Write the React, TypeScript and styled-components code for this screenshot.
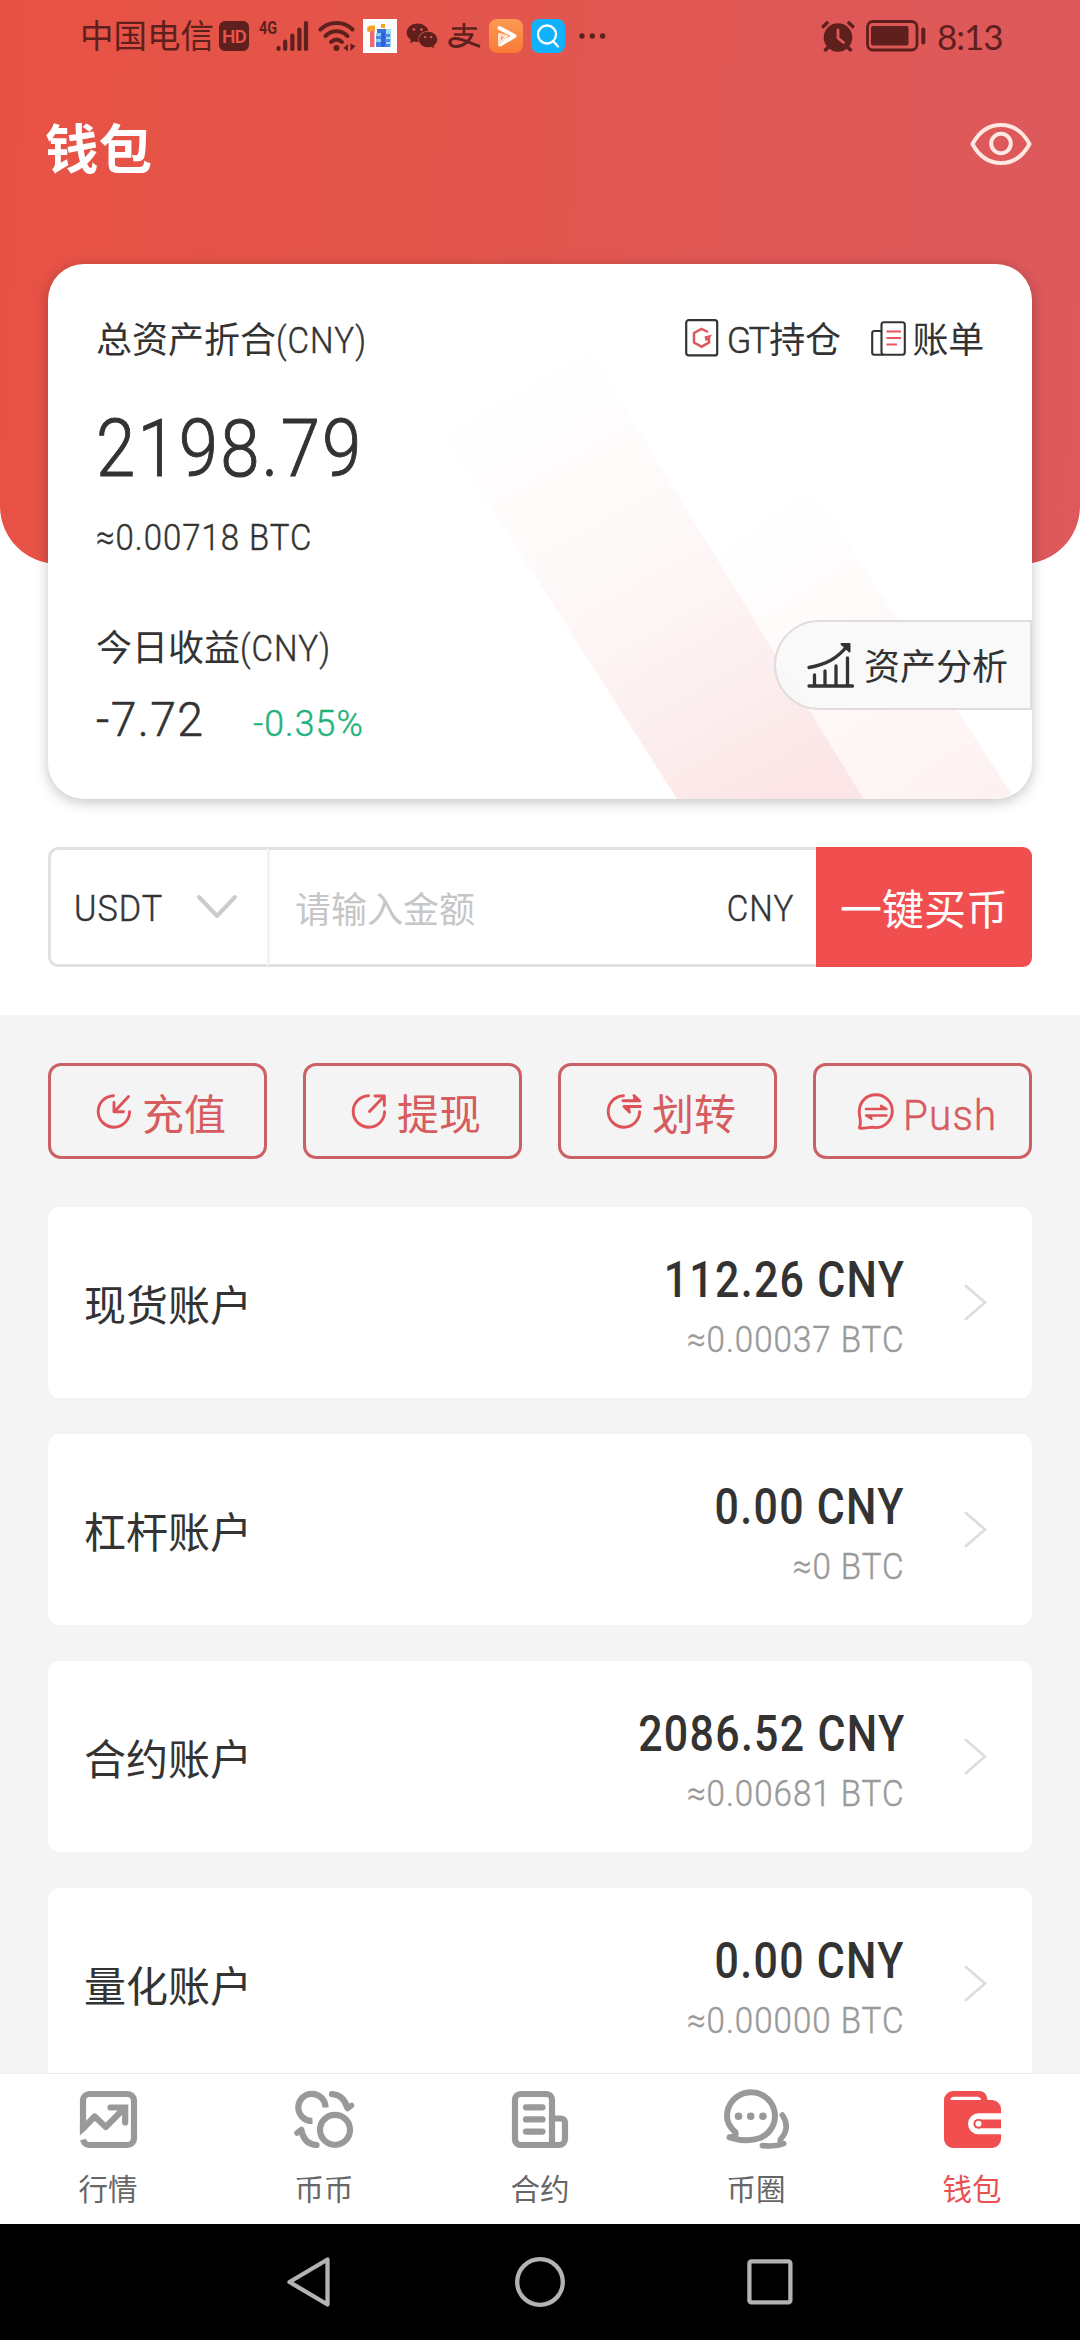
import React from 'react';
import styled, { createGlobalStyle } from 'styled-components';
import { FaWeixin } from 'react-icons/fa';

const INK = '#333333';
const STATUS = '#5e201d';
const RED = '#f14f4f';
const ROSE = '#cb6164';

const GlobalStyle = createGlobalStyle`
  *, *::before, *::after { box-sizing: border-box; }
  body {
    margin: 0;
    background: #fff;
    font-family: Roboto, "Noto Sans CJK SC", sans-serif;
    color: ${INK};
  }
  svg { display: block; flex: none; }
`;

const Screen = styled.div`
  display: flex;
  flex-direction: column;
  width: 1080px;
  height: 2340px;
  overflow: hidden;
  background: #fff;
`;

const Hero = styled.header`
  flex: none;
  height: 564px;
  border-radius: 0 0 58px 58px;
  background: linear-gradient(93deg, #e85245 0%, #e3554b 40%, #df5857 75%, #dd595b 100%);
`;

const StatusBar = styled.div`
  display: flex;
  align-items: center;
  height: 72px;
  padding: 0 77px 0 80px;
  color: ${STATUS};
`;

const StatusItem = styled.div<{ $gap?: number }>`
  display: flex;
  margin-left: ${(p) => p.$gap ?? 0}px;
`;

const Carrier = styled.span`
  margin-top: 2px;
  font-size: 33.5px;
  line-height: 74px;
  width: 134px;
  white-space: nowrap;
`;

const HdBadge = styled.span`
  width: 30px;
  height: 30px;
  border-radius: 6px;
  background: ${STATUS};
  color: #e6554b;
  font-size: 19px;
  font-weight: 600;
  line-height: 31px;
  letter-spacing: -1px;
  text-align: center;
`;

const NetType = styled.span`
  width: 19px;
  height: 32px;
  font-size: 19px;
  font-weight: 700;
  line-height: 16px;
  transform: scaleX(0.76);
  transform-origin: left center;
`;

const Clock = styled.span`
  margin-left: 11px;
  font-family: Lato, Roboto, sans-serif;
  font-size: 35px;
  line-height: 74px;
  letter-spacing: -1px;
  width: 66px;
  white-space: nowrap;
`;

const Spacer = styled.div`
  flex: 1;
`;

const TitleBar = styled.div`
  display: flex;
  align-items: center;
  justify-content: space-between;
  height: 144px;
  padding: 0 48px 0 45px;
`;

const Title = styled.h1`
  margin: 14px 0 0;
  font-size: 53.5px;
  line-height: 80px;
  font-weight: 700;
  color: #fff;
`;

const AssetCard = styled.section`
  position: relative;
  flex: none;
  height: 535px;
  margin: -300px 48px 0;
  padding: 53px 48px 0;
  border-radius: 36px;
  background: #fff;
  box-shadow: 0 3px 14px rgba(0, 0, 0, 0.24);
`;

const CardArt = styled.svg`
  position: absolute;
  inset: 0;
  border-radius: 36px;
`;

const CardBody = styled.div`
  position: relative;
`;

const CardHead = styled.div`
  display: flex;
  align-items: center;
  justify-content: space-between;
  height: 48px;
`;

const Label = styled.div<{ $top?: number }>`
  margin-top: ${(p) => p.$top ?? 0}px;
  font-size: 36px;
  line-height: 48px;
  white-space: nowrap;
`;

/* Narrow numeric face: light Roboto squeezed towards its anchored edge. */
const Din = styled.span<{ $sx?: number; $anchor?: 'left' | 'right' }>`
  display: inline-block;
  font-weight: 340;
  letter-spacing: 0.03em;
  white-space: nowrap;
  -webkit-text-stroke: 0.012em currentColor;
  transform: scaleX(${(p) => p.$sx ?? 0.92});
  transform-origin: ${(p) => p.$anchor ?? 'left'} center;
`;

const Balance = styled.div`
  margin-top: 36px;
  font-size: 80px;
  line-height: 96px;
`;

const CardLinks = styled.div`
  display: flex;
  align-items: center;
`;

const CardLink = styled.a<{ $gap?: number; $lift: number }>`
  display: flex;
  align-items: center;
  margin-left: ${(p) => p.$gap ?? 0}px;
  font-size: 36px;
  line-height: 48px;
  white-space: nowrap;

  svg { margin-bottom: ${(p) => p.$lift}px; }
`;

const LinkText = styled.span<{ $gap: number }>`
  margin-left: ${(p) => p.$gap}px;
  letter-spacing: -0.3px;
`;

const LatinTight = styled.span`
  font-weight: 340;
  letter-spacing: -2.8px;
  margin-right: 2px;
  -webkit-text-stroke: 0.012em currentColor;
`;

const Income = styled.div`
  display: flex;
  align-items: baseline;
  margin-top: 17px;
  font-size: 48px;
  line-height: 60px;
`;

const IncomeValue = styled.div`
  width: 157px;
`;

const IncomeRate = styled.div`
  font-size: 36px;
  color: #1fb27c;
`;

const AnalysisTab = styled.div`
  position: absolute;
  right: 0;
  bottom: 89px;
  display: flex;
  align-items: center;
  width: 258px;
  height: 90px;
  padding-left: 31px;
  border: 2px solid #dfdddd;
  border-radius: 45px 0 0 45px;
  background: rgba(248, 248, 248, 0.92);
  font-size: 36px;
  line-height: 48px;
`;

const AnalysisText = styled.span`
  margin: 6px 0 0 9px;
  white-space: nowrap;
`;

const BuyRow = styled.div`
  display: flex;
  flex: none;
  height: 120px;
  margin: 48px 48px 48px;
`;

const CoinSelect = styled.div`
  display: flex;
  align-items: center;
  justify-content: space-between;
  width: 219px;
  padding: 4px 29px 0 23px;
  border: 3px solid #e0e0e0;
  border-right: 0;
  border-radius: 10px 0 0 10px;
  font-size: 36px;

  svg { margin-bottom: 5px; }
`;

const AmountField = styled.div`
  display: flex;
  flex: 1;
  align-items: center;
  justify-content: space-between;
  padding: 4px 22px 0 25px;
  border: 3px solid #e0e0e0;
  border-left-color: #f3f3f3;
  border-right: 0;
  font-size: 36px;
`;

const Placeholder = styled.span`
  margin-bottom: 4px;
  color: #c6c6c8;
`;

const BuyButton = styled.button`
  width: 216px;
  padding: 0 0 1px;
  border: 0;
  border-radius: 0 9px 9px 0;
  background: ${RED};
  color: #fff;
  font: inherit;
  font-size: 42px;
`;

const Accounts = styled.main`
  display: flex;
  flex: 1;
  flex-direction: column;
  min-height: 0;
  overflow: hidden;
  padding: 48px 48px 0;
  background: #f4f4f4;
`;

const Actions = styled.div`
  display: grid;
  flex: none;
  grid-template-columns: repeat(4, 219px);
  gap: 36px;
  margin-bottom: 48px;
`;

const ActionButton = styled.button<{ $pad: number }>`
  display: flex;
  align-items: center;
  gap: 9px;
  height: 96px;
  padding: 0 0 0 ${(p) => p.$pad}px;
  border: 3px solid ${ROSE};
  border-radius: 13px;
  background: transparent;
  color: #d65c60;
  font: inherit;
  font-size: 42px;
  line-height: 60px;
  white-space: nowrap;
`;

const ActionText = styled.span`
  margin-top: 9px;
`;

const AccountCard = styled.div`
  display: flex;
  flex: none;
  align-items: center;
  height: 191px;
  margin-bottom: 36px;
  padding: 0 45px 0 36px;
  border-radius: 12px;
  background: #fff;
`;

const AccountName = styled.div`
  flex: 1;
  padding-top: 8px;
  font-size: 42px;
  line-height: 60px;
`;

const AccountValues = styled.div`
  display: flex;
  flex-direction: column;
  align-items: flex-end;
  margin-right: 59px;
`;

const AccountFiat = styled.div`
  margin-top: 6px;
  font-size: 50.5px;
  line-height: 64px;

  ${Din} {
    font-weight: 500;
    -webkit-text-stroke: 0;
  }
`;

const AccountBtc = styled.div`
  margin: 4px 1px 0 0;
  font-size: 36px;
  line-height: 48px;
  color: #999;
`;

const TabBar = styled.nav`
  display: grid;
  flex: none;
  grid-template-columns: repeat(5, 1fr);
  height: 151px;
  border-top: 1px solid #ececec;
  background: #fff;
`;

const Tab = styled.div<{ $active?: boolean }>`
  display: flex;
  flex-direction: column;
  align-items: center;
  padding-top: 14px;
  font-size: 29.5px;
  line-height: 40px;
  color: ${(p) => (p.$active ? '#e9504f' : '#666')};

  span { margin-top: 20px; }
`;

const SystemNav = styled.div`
  display: flex;
  flex: none;
  justify-content: space-between;
  align-items: center;
  height: 116px;
  padding: 0 286px 0 285px;
  background: #000;
`;

const SignalIcon = () => (
  <svg width="33" height="32" viewBox="0 0 33 32" stroke={STATUS} strokeWidth="4.2" strokeLinecap="round">
    <path d="M2.500 28v1M9.200 21.500v7.500M16.400 15.500v13.500M23.400 9.500v19.500M30 3v26" />
  </svg>
);

const WifiIcon = () => (
  <svg width="38" height="32" viewBox="0 0 38 32" fill="none" stroke={STATUS} strokeWidth="4" strokeLinecap="round">
    <path d="M2.500 9.500C11 0.800 26 0.800 34.500 9.500" />
    <path d="M7.500 16C14 9.700 23 9.700 29.500 16" />
    <path d="M13 22c3.500-3 7.500-3 11 0" />
    <circle cx="18.500" cy="28" r="3" fill={STATUS} stroke="none" />
    <path d="M30 24v7.500l-4.500-3.500zM32.500 31v-7.500l5 2.500z" fill={STATUS} stroke="none" />
  </svg>
);

const HealthAppIcon = () => (
  <svg width="34" height="34" viewBox="0 0 34 34">
    <rect width="34" height="34" fill="#fff" />
    <path d="M4 8.500l3-2h5v5.500l-7.500 1z" fill="#f7a128" />
    <path d="M7 12.500l4.500-1V28H7z" fill="#ee6a72" />
    <rect x="18" y="5" width="4" height="4" fill="#f7a128" />
    <rect x="14" y="10" width="9" height="4" fill="#3b6fd8" />
    <rect x="23" y="10" width="5" height="18" fill="#9fdcf8" />
    <rect x="18" y="14" width="5" height="14" fill="#2f62dd" />
    <rect x="13" y="14" width="5" height="3" fill="#8fd0f5" />
    <rect x="13" y="17" width="5" height="3" fill="#4f86ea" />
    <rect x="13" y="20" width="5" height="3" fill="#8fd0f5" />
    <rect x="13" y="23" width="5" height="5" fill="#4a7cf0" />
    <rect x="22" y="15" width="5" height="3" fill="#4f86ea" />
    <rect x="22" y="20" width="5" height="3" fill="#4f86ea" />
    <rect x="22" y="25" width="5" height="3" fill="#4f86ea" />
  </svg>
);

const AlipayIcon = () => (
  <svg width="33" height="26" viewBox="0 0 33 26" fill="none" stroke={STATUS} strokeWidth="2.600">
    <path d="M4 5.500h25M16 0v11M6 11.500h19" />
    <path d="M24.500 11c-3 7-9 12.500-16 12.500-8 0-9-7.500-1.500-8 6-.4 14 4 25 8" strokeWidth="3" />
  </svg>
);

const PlayAppIcon = () => (
  <svg width="34" height="34" viewBox="0 0 34 34">
    <defs>
      <linearGradient id="playBg" x1="0" y1="0" x2="0" y2="1">
        <stop offset="0" stopColor="#fd9a52" />
        <stop offset="1" stopColor="#f97a35" />
      </linearGradient>
    </defs>
    <rect width="34" height="34" rx="8" fill="url(#playBg)" />
    <path d="M10.500 9L25.500 17 11 25.500" fill="none" stroke="#fff" strokeWidth="4" strokeLinecap="round" strokeLinejoin="round" />
    <path d="M10.500 15.500v9l7-7z" fill="none" stroke="#ffe2cc" strokeWidth="3" strokeLinejoin="round" />
  </svg>
);

const SearchAppIcon = () => (
  <svg width="34" height="34" viewBox="0 0 34 34" fill="none" stroke="#fff" strokeWidth="2.300">
    <rect width="34" height="34" rx="8" fill="#0fb2fb" stroke="none" />
    <circle cx="16" cy="15.500" r="9" />
    <path d="M22 22l5 5.500" strokeLinecap="round" />
  </svg>
);

const MoreDots = () => (
  <svg width="27" height="6" viewBox="0 0 27 6" fill={STATUS}>
    <circle cx="3" cy="3" r="2.700" />
    <circle cx="13.300" cy="3" r="2.700" />
    <circle cx="23.600" cy="3" r="2.700" />
  </svg>
);

const AlarmIcon = () => (
  <svg width="34" height="31" viewBox="0 0 34 31" fill="none" stroke={STATUS} strokeWidth="3.600" strokeLinecap="round">
    <circle cx="17" cy="16.500" r="14.300" fill={STATUS} stroke="none" />
    <path d="M2.300 5.500L6 2M31.700 5.500L28 2M6.500 27l-2 1.800M27.500 27l2 1.800" />
    <path d="M17 9v8l5.500 4.500" stroke="#df5858" strokeWidth="2.800" />
  </svg>
);

const BatteryIcon = () => (
  <svg width="60" height="32" viewBox="0 0 60 32" fill="none" stroke={STATUS}>
    <rect x="1.500" y="1.500" width="49.500" height="28.500" rx="5.500" strokeWidth="2.800" />
    <rect x="5" y="6" width="37.500" height="19.500" rx="2" fill={STATUS} stroke="none" />
    <path d="M57.300 9.500v13" strokeWidth="4" strokeLinecap="round" />
  </svg>
);

const EyeIcon = () => (
  <svg width="62" height="44" viewBox="0 0 62 44" fill="none" stroke="#ffe7e4" strokeWidth="4" strokeLinejoin="round">
    <path d="M2.500 22C9 10 19 3 31 3s22 7 28.500 19C53 34 43 41 31 41S9 34 2.500 22z" />
    <circle cx="31" cy="21.500" r="9.800" />
  </svg>
);

const GtIcon = () => (
  <svg width="34" height="38" viewBox="0 0 34 38" fill="none">
    <rect x="1.200" y="1.200" width="31" height="35.200" rx="2.500" stroke={INK} strokeWidth="2.200" />
    <path d="M23 13l-6.500-3.200-7.500 4.200v9.500l7.500 4.200 7.500-4.200v-4.500" stroke="#dc5a5e" strokeWidth="2.500" />
    <path d="M19.500 17.500l7.500-2-3 5.500-3.500 1z" fill="#dc5a5e" />
  </svg>
);

const BillIcon = () => (
  <svg width="35" height="35" viewBox="0 0 35 35" fill="none" stroke={INK} strokeWidth="2.100">
    <rect x="10.500" y="1.200" width="23.300" height="32.500" rx="2.500" />
    <path d="M10.500 10H3.200a2 2 0 0 0-2 2v19.700a2 2 0 0 0 2 2h9" />
    <path d="M15.500 10.500h14.500M15.500 17h14.500M15.500 23.500h10.500" stroke="#e5575b" strokeWidth="2.200" />
  </svg>
);

const GrowthIcon = () => (
  <svg width="48" height="46" viewBox="0 0 48 46" fill="none" stroke={INK} strokeWidth="3.300" strokeLinecap="round">
    <path d="M2 44h43.500M7.500 43V33M18 43V29M29 43V24M40.500 43V16" />
    <path d="M2 25.500C18 23 30 17 41 3" />
    <path d="M34.500 2h8v7.500z" fill={INK} strokeLinejoin="round" strokeWidth="2" />
  </svg>
);

const DownChevron = () => (
  <svg width="42" height="25" viewBox="0 0 42 25" fill="none" stroke="#ccc" strokeWidth="4" strokeLinecap="round" strokeLinejoin="round">
    <path d="M3 3l18 19L39 3" />
  </svg>
);

const RightChevron = () => (
  <svg width="23" height="37" viewBox="0 0 23 37" fill="none" stroke="#ddd" strokeWidth="2.800" strokeLinecap="round">
    <path d="M2 2l19 16.500L2 35" />
  </svg>
);

const ActionIcon = ({ kind }: { kind: 'in' | 'out' | 'swap' | 'push' }) => (
  <svg width="37" height="37" viewBox="0 0 37 37" fill="none" stroke="#df5257" strokeWidth="2.900" strokeLinecap="round" strokeLinejoin="round">
    {kind !== 'push' && <path d="M17.500 2.800A15.700 15.700 0 1 0 33.600 18.800" />}
    {kind === 'in' && <path d="M32.500 3.500L18.500 18.500M18 9.500v9.200h9.500" />}
    {kind === 'out' && <path d="M18.500 18.500L33 3.500M24 3h9.300v9.500" />}
    {kind === 'swap' && (
      <>
        <path d="M17 7.700h16.500L28 2.500M34.500 13.500H18l5.500 5.500" />
        <path d="M28 3v4.500h5zM23.500 18.500V14H19z" fill="#df5257" strokeWidth="1.500" />
      </>
    )}
    {kind === 'push' && (
      <>
        <path d="M2.500 34c1.800-3 .8-7 0-12C.800 9.500 9 1.800 19 1.800c9.200 0 16.300 7.200 16.300 16.200S28 34.600 18.500 34.600c-4-1.500-9 1-14.500.6-1.500-.1-1.800-.5-1.500-1.200z" />
        <path d="M9 16h20.500L24 12.800M29.500 22.500H9l5.500 3.300" strokeWidth="2.400" />
        <path d="M24 13v3h5zM14.500 25.500v-3H10z" fill="#df5257" strokeWidth="1.200" />
      </>
    )}
  </svg>
);

const MarketIcon = () => (
  <svg width="60" height="62" viewBox="0 0 60 62" fill="none" stroke="#999" strokeWidth="6.200">
    <path d="M5 42V12.500A6.500 6.500 0 0 1 11.500 6h38a6.500 6.500 0 0 1 6.500 6.500v38a6.500 6.500 0 0 1-6.500 6.500h-38c-3.500 0-5.500-2-6.500-5.500" />
    <path d="M4 41.500L16.700 28.500l11 10.500L46 20.500" strokeLinejoin="round" />
    <path d="M32.500 19.500h14.700v15" strokeLinecap="round" />
    <path d="M1 48.500L9 41.500v5L1 53.500z" fill="#fff" stroke="none" />
    <path d="M1.900 38v9.500L9 41z" fill="#999" stroke="none" />
  </svg>
);

const SpotIcon = () => (
  <svg width="62" height="62" viewBox="0 0 62 62" fill="none" stroke="#999" strokeWidth="6.200">
    <path d="M19.500 33a13.600 13.600 0 1 1 13-13.500" />
    <circle cx="42" cy="41.800" r="15" />
    <path d="M39 6.100c7.500.4 12.500 4.500 15 12.900" strokeLinecap="round" />
    <path d="M54.500 20.500l4-3" strokeLinecap="round" strokeWidth="5.500" />
    <path d="M23.500 57C15.500 56.500 10.500 52 8.500 43" strokeLinecap="round" />
    <path d="M4 45l4.500-3.500" strokeLinecap="round" strokeWidth="5.500" />
  </svg>
);

const ContractIcon = () => (
  <svg width="60" height="62" viewBox="0 0 60 62" fill="none" stroke="#999" strokeWidth="6.200">
    <path d="M44 57H10.500A5.500 5.500 0 0 1 5 51.500v-40A5.500 5.500 0 0 1 10.500 6h26a5.500 5.500 0 0 1 5.500 5.500V57" />
    <path d="M43 30.500h8a4 4 0 0 1 4 4V51a6 6 0 0 1-6 6h-6" />
    <path d="M16 19.300h16.500M16 31.400h16.500M16 43.600h16.500" strokeLinecap="round" />
  </svg>
);

const CircleIcon = () => (
  <svg width="68" height="62" viewBox="0 0 68 62" fill="none" stroke="#999" strokeWidth="6.200" strokeLinecap="round" strokeLinejoin="round">
    <path d="M7.500 49.300c4.500-.3 7-1.800 6-5C8 39.500 5 34 5 28.300a24 23.700 0 1 1 33 21.700C28 53.500 16 52 7.500 49.300z" strokeWidth="6" />
    <path d="M60.300 27c5.200 7.500 5.500 16-1.500 24-1.500 3-.5 4.200 3 4.500-6 2.500-14 2.900-21.500 2.100" strokeWidth="5.600" />
    <path d="M16.500 28.300h.01M28.700 28.300h.01M40.900 28.300h.01" strokeWidth="7.600" />
  </svg>
);

const WalletIcon = () => (
  <svg width="60" height="62" viewBox="0 0 60 62">
    <path d="M2 12a9 9 0 0 1 9-9h26c5 0 8 3 8.500 9h4.500a9 9 0 0 1 9 9v30a9 9 0 0 1-9 9H11a9 9 0 0 1-9-9z" fill={RED} />
    <path d="M8.500 12c0-2 1.500-3.200 3.500-3.200h23c2.500 0 3.500 1.200 4 3.200z" fill="#fff" />
    <path d="M60 25.300H36.500a10.500 10.500 0 0 0 0 21H60v-6H36a4.200 4.200 0 0 1 0-8.900h24z" fill="#fff" />
    <circle cx="36.500" cy="35.800" r="4.900" fill={RED} />
    <circle cx="36.500" cy="35.800" r="3" fill="#fff" />
  </svg>
);

const BackIcon = () => (
  <svg width="49" height="54" viewBox="0 0 49 54" fill="none" stroke="#b3b3b3" strokeWidth="4.300" strokeLinejoin="round">
    <path d="M42.500 4.500v45L4.500 27z" />
  </svg>
);

const HomeIcon = () => (
  <svg width="52" height="52" viewBox="0 0 52 52" fill="none" stroke="#b3b3b3" strokeWidth="4.300">
    <circle cx="26" cy="26" r="22.800" />
  </svg>
);

const RecentIcon = () => (
  <svg width="48" height="48" viewBox="0 0 48 48" fill="none" stroke="#b3b3b3" strokeWidth="4.300">
    <rect x="3.400" y="3.400" width="41" height="41" rx="2" />
  </svg>
);

const accounts = [
  { name: '现货账户', fiat: '112.26 CNY', btc: '≈0.00037 BTC' },
  { name: '杠杆账户', fiat: '0.00 CNY', btc: '≈0 BTC' },
  { name: '合约账户', fiat: '2086.52 CNY', btc: '≈0.00681 BTC' },
  { name: '量化账户', fiat: '0.00 CNY', btc: '≈0.00000 BTC' },
];

const tabs = [
  { label: '行情', icon: <MarketIcon /> },
  { label: '币币', icon: <SpotIcon /> },
  { label: '合约', icon: <ContractIcon /> },
  { label: '币圈', icon: <CircleIcon /> },
  { label: '钱包', icon: <WalletIcon />, active: true },
];

export default function App() {
  return (
    <>
      <GlobalStyle />
      <Screen>
        <Hero>
          <StatusBar>
            <Carrier>中国电信</Carrier>
            <StatusItem $gap={5}><HdBadge>HD</HdBadge></StatusItem>
            <StatusItem $gap={10}><NetType>4G</NetType></StatusItem>
            <StatusItem $gap={-2}><SignalIcon /></StatusItem>
            <StatusItem $gap={9}><WifiIcon /></StatusItem>
            <StatusItem $gap={7}><HealthAppIcon /></StatusItem>
            <StatusItem $gap={9}><FaWeixin size={32} /></StatusItem>
            <StatusItem $gap={10}><AlipayIcon /></StatusItem>
            <StatusItem $gap={8}><PlayAppIcon /></StatusItem>
            <StatusItem $gap={8}><SearchAppIcon /></StatusItem>
            <StatusItem $gap={14}><MoreDots /></StatusItem>
            <Spacer />
            <AlarmIcon />
            <StatusItem $gap={11}><BatteryIcon /></StatusItem>
            <Clock>8:13</Clock>
          </StatusBar>
          <TitleBar>
            <Title>钱包</Title>
            <EyeIcon />
          </TitleBar>
        </Hero>

        <AssetCard>
          <CardArt width="984" height="535" viewBox="0 0 984 535">
            <defs>
              <linearGradient id="bandA" gradientUnits="userSpaceOnUse" x1="480" y1="110" x2="720" y2="535">
                <stop offset="0" stopColor="#fceaea" stopOpacity="0" />
                <stop offset="0.4" stopColor="#fceeed" stopOpacity="0.35" />
                <stop offset="1" stopColor="#fce5e6" />
              </linearGradient>
              <linearGradient id="bandB" gradientUnits="userSpaceOnUse" x1="720" y1="240" x2="930" y2="535">
                <stop offset="0" stopColor="#fdf3f2" stopOpacity="0" />
                <stop offset="1" stopColor="#fdf2f1" />
              </linearGradient>
            </defs>
            <path d="M551 -100L967 535H815L474 0z" fill="url(#bandB)" />
            <path d="M288 0H489L815.500 535H629z" fill="url(#bandA)" />
          </CardArt>
          <CardBody>
            <CardHead>
              <Label>总资产折合<Din>(CNY)</Din></Label>
              <CardLinks>
                <CardLink $lift={7}>
                  <GtIcon />
                  <LinkText $gap={8}><LatinTight>GT</LatinTight>持仓</LinkText>
                </CardLink>
                <CardLink $gap={30} $lift={5}>
                  <BillIcon />
                  <LinkText $gap={7}>账单</LinkText>
                </CardLink>
              </CardLinks>
            </CardHead>
            <Balance><Din $sx={0.885}>2198.79</Din></Balance>
            <Label $top={17}><Din $sx={0.915}>≈0.00718 BTC</Din></Label>
            <Label $top={63}>今日收益<Din>(CNY)</Din></Label>
            <Income>
              <IncomeValue><Din $sx={0.965}>-7.72</Din></IncomeValue>
              <IncomeRate><Din $sx={0.99}>-0.35%</Din></IncomeRate>
            </Income>
          </CardBody>
          <AnalysisTab>
            <GrowthIcon />
            <AnalysisText>资产分析</AnalysisText>
          </AnalysisTab>
        </AssetCard>

        <BuyRow>
          <CoinSelect>
            <Din $sx={0.95}>USDT</Din>
            <DownChevron />
          </CoinSelect>
          <AmountField>
            <Placeholder>请输入金额</Placeholder>
            <Din $anchor="right">CNY</Din>
          </AmountField>
          <BuyButton>一键买币</BuyButton>
        </BuyRow>

        <Accounts>
          <Actions>
            <ActionButton $pad={45}><ActionIcon kind="in" /><ActionText>充值</ActionText></ActionButton>
            <ActionButton $pad={45}><ActionIcon kind="out" /><ActionText>提现</ActionText></ActionButton>
            <ActionButton $pad={45}><ActionIcon kind="swap" /><ActionText>划转</ActionText></ActionButton>
            <ActionButton $pad={41}><ActionIcon kind="push" /><ActionText><Din $sx={0.96}>Push</Din></ActionText></ActionButton>
          </Actions>
          {accounts.map((a) => (
            <AccountCard key={a.name}>
              <AccountName>{a.name}</AccountName>
              <AccountValues>
                <AccountFiat><Din $sx={0.85} $anchor="right">{a.fiat}</Din></AccountFiat>
                <AccountBtc><Din $sx={0.92} $anchor="right">{a.btc}</Din></AccountBtc>
              </AccountValues>
              <RightChevron />
            </AccountCard>
          ))}
        </Accounts>

        <TabBar>
          {tabs.map((t) => (
            <Tab key={t.label} $active={t.active}>
              {t.icon}
              <span>{t.label}</span>
            </Tab>
          ))}
        </TabBar>
        <SystemNav>
          <BackIcon />
          <HomeIcon />
          <RecentIcon />
        </SystemNav>
      </Screen>
    </>
  );
}
